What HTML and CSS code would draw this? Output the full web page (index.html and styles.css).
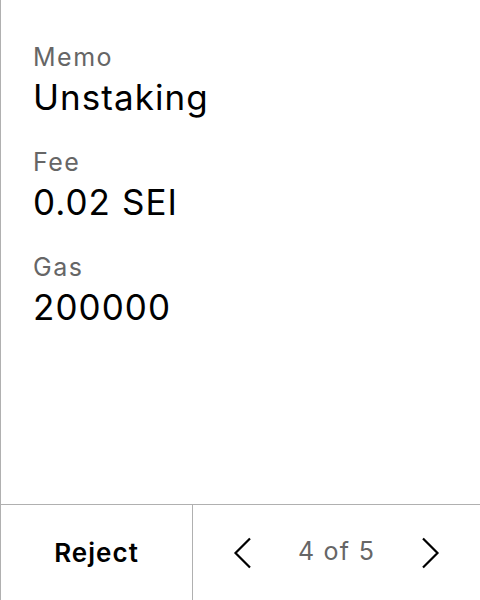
FILE: index.html
```html
<!DOCTYPE html>
<html>
<head>
<meta charset="utf-8">
<link rel="stylesheet" href="styles.css">
</head>
<body>
<div class="panel">
  <div class="details">
    <div class="item">
      <div class="label">Memo</div>
      <div class="value">Unstaking</div>
    </div>
    <div class="item">
      <div class="label">Fee</div>
      <div class="value">0.02 SEI</div>
    </div>
    <div class="item">
      <div class="label">Gas</div>
      <div class="value">200000</div>
    </div>
  </div>
  <div class="actions">
    <div class="reject">Reject</div>
    <div class="pager">
      <svg class="chev" width="20" height="32" viewBox="0 0 20 32"><path d="M17 1.5 L2.5 16 L17 30.5" fill="none" stroke="#000" stroke-width="2.2"/></svg>
      <span class="count">4 of 5</span>
      <svg class="chev" width="20" height="32" viewBox="0 0 20 32"><path d="M3 1.5 L17.5 16 L3 30.5" fill="none" stroke="#000" stroke-width="2.2"/></svg>
    </div>
  </div>
</div>
</body>
</html>
```
FILE: styles.css
```css
html, body {
  margin: 0;
  padding: 0;
  background: #fff;
}
body {
  font-family: Inter, "Noto Sans", sans-serif;
}
.panel {
  height: 600px;
  box-sizing: border-box;
  border-left: 1px solid #b0b0b0;
  display: flex;
  flex-direction: column;
}
.details {
  flex: 1;
  padding: 43px 0 0 32px;
  display: flex;
  flex-direction: column;
  gap: 31px;
}
.label {
  font-size: 25px;
  line-height: 28px;
  letter-spacing: 0.06em;
  color: #666;
}
.value {
  margin-top: 6px;
  font-size: 35px;
  line-height: 40px;
  letter-spacing: 0.03em;
  color: #000;
}
.actions {
  height: 96px;
  box-sizing: border-box;
  border-top: 1px solid #b0b0b0;
  display: flex;
}
.reject {
  width: 191px;
  border-right: 1px solid #b0b0b0;
  display: flex;
  align-items: center;
  justify-content: center;
  font-size: 26px;
  font-weight: 600;
  letter-spacing: 0.04em;
  color: #000;
}
.pager {
  flex: 1;
  display: flex;
  align-items: center;
  justify-content: center;
  gap: 45px;
}
.count {
  font-size: 25px;
  letter-spacing: 0.05em;
  color: #666;
  position: relative;
  top: -2px;
}
.chev {
  display: block;
}
```
